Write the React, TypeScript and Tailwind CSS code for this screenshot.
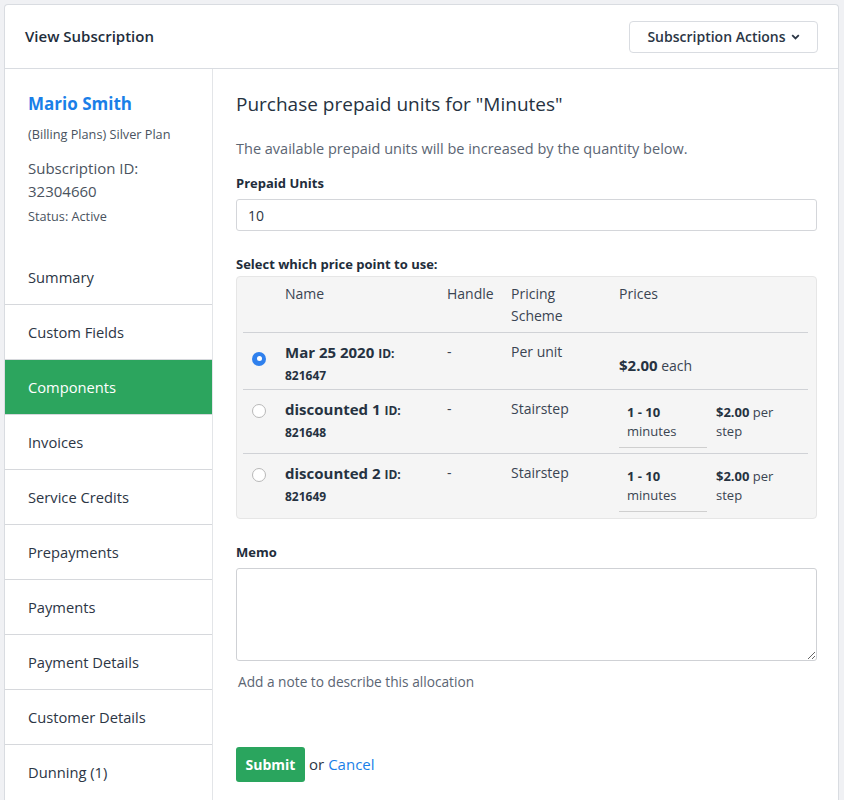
import React from "react";

const F = { fontFamily: "'Open Sans', 'Liberation Sans', sans-serif" };

function Radio({ checked }: { checked?: boolean }) {
  return checked ? (
    <span className="inline-flex h-[14px] w-[14px] items-center justify-center rounded-full bg-[#2f80ed]">
      <span className="h-[5px] w-[5px] rounded-full bg-white" />
    </span>
  ) : (
    <span className="inline-block h-[14px] w-[14px] rounded-full border border-[#b8b8b8] bg-white" />
  );
}

function StairPrice() {
  return (
    <div className="flex pt-[5px] text-[13px] leading-[19px]">
      <div className="w-[88px] border-b border-[#cfcfcf] px-[8px] pb-[6px]">
        <div className="font-bold text-[#263241]">1 - 10</div>
        <div className="text-[#3a4452]">minutes</div>
      </div>
      <div className="pl-[9px] text-[#3a4452]">
        <div>
          <span className="font-bold text-[#263241]">$2.00</span> per
        </div>
        <div>step</div>
      </div>
    </div>
  );
}

export default function App() {
  const nav = [
    "Summary",
    "Custom Fields",
    "Components",
    "Invoices",
    "Service Credits",
    "Prepayments",
    "Payments",
    "Payment Details",
    "Customer Details",
    "Dunning (1)",
  ];
  const rows = [
    { name: "Mar 25 2020", id: "821647", scheme: "Per unit", checked: true, stair: false },
    { name: "discounted 1", id: "821648", scheme: "Stairstep", checked: false, stair: true },
    { name: "discounted 2", id: "821649", scheme: "Stairstep", checked: false, stair: true },
  ];
  return (
    <div style={F} className="min-h-screen overflow-hidden bg-[#f0f1f4] pl-[4px] pr-[5px] pt-[4px] text-[#263241]">
      <div className="rounded-t-[4px] border border-b-0 border-[#d9dce1] bg-white">
        <div className="flex h-[64px] items-center justify-between border-b border-[#d9dce1] px-[20px]">
          <div className="text-[15px] font-semibold text-[#222d3b]">View Subscription</div>
          <button className="flex h-[32px] w-[189px] items-center justify-center gap-[5px] rounded-[4px] border border-[#d9dce1] bg-white text-[14px] font-semibold text-[#2b3645]">
            Subscription Actions
            <svg width="9" height="6" viewBox="0 0 9 6" fill="none">
              <path d="M1.2 1.2 4.5 4.4 7.8 1.2" stroke="#2b3645" strokeWidth="1.8" />
            </svg>
          </button>
        </div>
        <div className="flex">
          <div className="w-[208px] shrink-0 border-r border-[#e3e5e8]">
            <div className="px-[23px] pb-[25px] pt-[23px]">
              <div className="text-[17px] font-bold leading-[24px] text-[#1a7fe8]">Mario Smith</div>
              <div className="mt-[9px] text-[12.7px] leading-[18px] text-[#4a5360]">(Billing Plans) Silver Plan</div>
              <div className="mt-[14px] text-[15px] leading-[23px] text-[#4a5360]">
                Subscription ID:
                <br />
                32304660
              </div>
              <div className="mt-[4px] text-[12.7px] leading-[18px] text-[#4a5360]">Status: Active</div>
            </div>
            {nav.map((n, i) => (
              <div
                key={n}
                className={
                  "flex h-[55px] items-center px-[23px] text-[14.7px] " +
                  (i === nav.length - 1 ? "" : "border-b border-[#d6d8dc] ") +
                  (n === "Components" ? "bg-[#2ca55e] text-white" : "text-[#2c3645]")
                }
              >
                {n}
              </div>
            ))}
          </div>
          <div className="flex-1 pl-[23px] pr-[21px] pt-[22px]">
            <div className="text-[19px] leading-[26px] text-[#263241]">Purchase prepaid units for "Minutes"</div>
            <div className="mt-[22px] text-[14.5px] leading-[20px] text-[#5b6573]">
              The available prepaid units will be increased by the quantity below.
            </div>
            <div className="mt-[15px] text-[13px] font-bold leading-[18px] text-[#222d3b]">Prepaid Units</div>
            <div className="mt-[7px] flex h-[32px] items-center rounded-[3px] border border-[#d4d6da] px-[11px] text-[14px] text-[#2c3645]">
              10
            </div>
            <div className="mt-[24px] text-[13px] font-bold leading-[18px] text-[#222d3b]">Select which price point to use:</div>
            <div className="mt-[3px] rounded-[4px] border border-[#e6e6e6] bg-[#f5f5f5] pb-[6px] pl-[6px] pr-[8px]">
              <div className="grid grid-cols-[42px_162px_64px_108px_1fr] border-b border-[#d0d2d6] pb-[5px] pt-[6px] text-[14px] leading-[22px] text-[#3a4452]">
                <div />
                <div>Name</div>
                <div>Handle</div>
                <div>
                  Pricing
                  <br />
                  Scheme
                </div>
                <div>Prices</div>
              </div>
              {rows.map((r, i) => (
                <div
                  key={r.id}
                  className={
                    "grid grid-cols-[42px_162px_64px_108px_1fr] pt-[8px] text-[14px] leading-[22px] " +
                    (i < rows.length - 1 ? "border-b border-[#d0d2d6] " : "") +
                    (i === rows.length - 1 ? "h-[58px]" : r.stair ? "h-[64px]" : "h-[57px]")
                  }
                >
                  <div className="pl-[9px] pt-[4px]">
                    <Radio checked={r.checked} />
                  </div>
                  <div>
                    <div className="text-[15px] font-bold text-[#263241]">
                      {r.name} <span className="text-[12px]">ID:</span>
                    </div>
                    <div className="text-[12px] font-bold text-[#263241]">{r.id}</div>
                  </div>
                  <div className="text-[#3a4452]">-</div>
                  <div className="text-[14px] text-[#3a4452]">{r.scheme}</div>
                  <div>
                    {r.stair ? (
                      <StairPrice />
                    ) : (
                      <div className="pt-[13px] text-[14px] text-[#3a4452]">
                        <span className="text-[15px] font-bold text-[#263241]">$2.00</span> each
                      </div>
                    )}
                  </div>
                </div>
              ))}
            </div>
            <div className="mt-[24px] text-[13px] font-bold leading-[18px] text-[#222d3b]">Memo</div>
            <textarea className="mt-[7px] block h-[93px] w-full resize-y rounded-[3px] border border-[#cfd1d5] outline-none" />
            <div className="mt-[11px] pl-[2px] text-[13.7px] leading-[20px] text-[#5b6573]">
              Add a note to describe this allocation
            </div>
            <div className="mt-[55px] flex items-center gap-[4px] pb-[20px]">
              <button className="h-[35px] w-[69px] rounded-[3px] bg-[#2aa55e] text-[14px] font-bold text-white">Submit</button>
              <span className="text-[15px] text-[#2c3645]">or</span>
              <span className="text-[15px] text-[#1a7fe8]">Cancel</span>
            </div>
          </div>
        </div>
      </div>
    </div>
  );
}
